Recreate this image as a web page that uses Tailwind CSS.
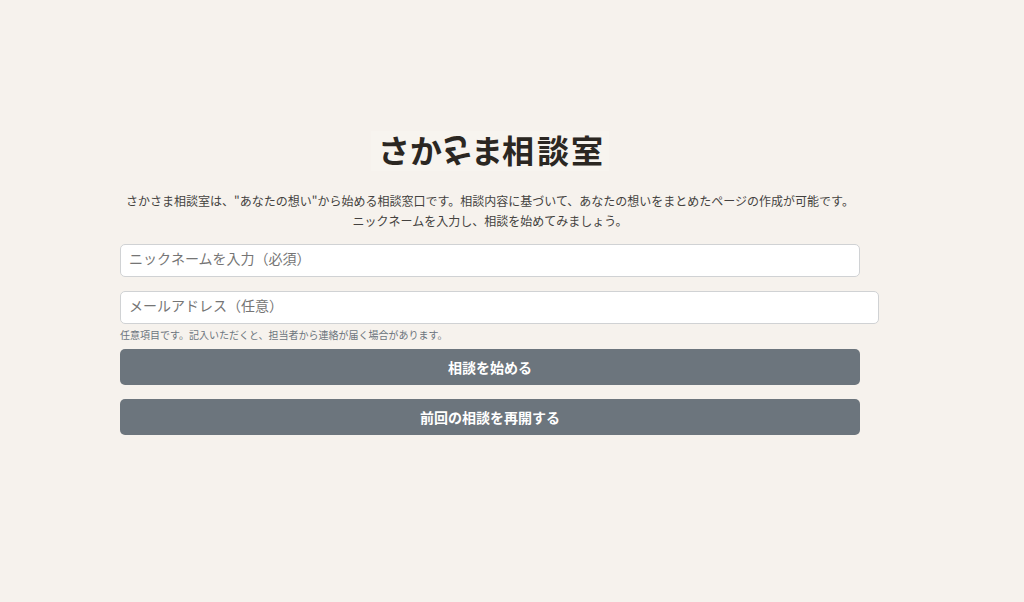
<!DOCTYPE html>
<html lang="ja">
<head>
    <meta charset="UTF-8">
    <meta name="viewport" content="width=device-width, initial-scale=1.0">
    <title>さかさま相談室</title>
    <script src="https://cdn.jsdelivr.net/npm/@tailwindcss/browser@4"></script>
</head>
<body class="bg-[#f6f2ed] text-[#444240] font-['Noto_Sans_CJK_JP',sans-serif]">
    <main class="min-h-screen flex flex-col justify-center pl-[120px] pr-[164px] pb-9">
        <h1 class="flex justify-center">
            <!-- ロゴ: 3文字目の「さ」は上下さかさま -->
            <svg class="w-[238px] h-10 bg-[#f7f4ef] overflow-visible" viewBox="0 0 238 40" role="img" aria-label="さかさま相談室" fill="#2b2722" font-family="'Noto Sans CJK JP', sans-serif" font-weight="700">
                <text font-size="32" x="7 39" y="32">さか</text>
                <text font-size="33" x="-16" y="13" transform="translate(86 20) rotate(166)">さ</text>
                <text font-size="32" x="100" y="32">ま</text>
                <text font-size="32" x="131 166 200" y="32">相談室</text>
            </svg>
        </h1>
        <p class="mt-5 text-xs leading-5 text-center">さかさま相談室は、"あなたの想い"から始める相談窓口です。相談内容に基づいて、あなたの想いをまとめたページの作成が可能です。<br>ニックネームを入力し、相談を始めてみましょう。</p>
        <form class="mt-[13px] flex flex-col">
            <input type="text" name="nickname" aria-label="ニックネーム" required placeholder="ニックネームを入力（必須）" class="h-[33px] px-2 pb-1.5 rounded-[5px] border border-[#d0d2d4] bg-white text-sm placeholder:text-[#757575]">
            <input type="email" name="email" aria-label="メールアドレス" aria-describedby="emailHelp" placeholder="メールアドレス（任意）" class="mt-3.5 -mr-[19px] h-[33px] px-2 pb-1.5 rounded-[5px] border border-[#d0d2d4] bg-white text-sm placeholder:text-[#757575]">
            <p id="emailHelp" class="mt-[3px] text-[10px] leading-4 text-[#6c757d]">任意項目です。記入いただくと、担当者から連絡が届く場合があります。</p>
            <button type="submit" class="mt-1.5 h-9 rounded-[5px] bg-[#6c757d] text-white text-sm font-bold cursor-pointer">相談を始める</button>
            <button type="button" class="mt-3.5 h-9 rounded-[5px] bg-[#6c757d] text-white text-sm font-bold cursor-pointer">前回の相談を再開する</button>
        </form>
    </main>
</body>
</html>
